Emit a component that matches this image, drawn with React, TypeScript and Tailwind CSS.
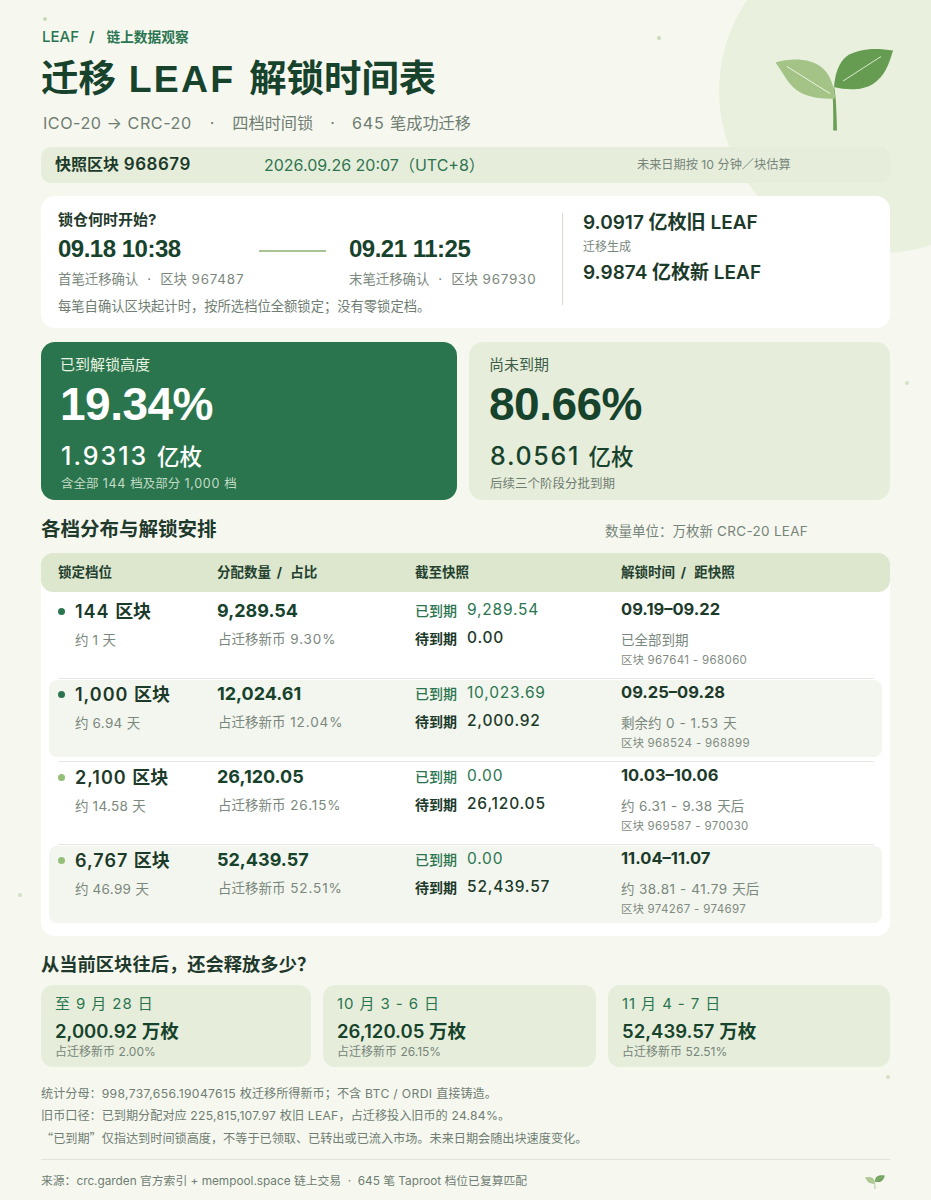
import React from "react";

const LIB = "font-['Liberation_Sans','Noto_Sans_CJK_SC',sans-serif]";

function T({ s, l }: { s: string; l: string }) {
  const parts = s.split(/([\x20-\x7e→·–]+)/);
  return (
    <>
      {parts.map((p, i) =>
        i % 2 === 1 ? (
          <span key={i} className={l}>
            {p}
          </span>
        ) : (
          p
        ),
      )}
    </>
  );
}

function Sprout({ className }: { className: string }) {
  return (
    <svg viewBox="770 44 130 90" className={className}>
      <path d="M834 86 C836 96 836.5 110 837 130.5 L833.2 130.5 C833.5 115 833 100 832.5 92 Z" fill="#6b9f56" />
      <path d="M775.5 62.5 C790 58 808 58 820 66 C830 73 834 86 835.5 98.5 C820 99.5 803 97 793 87 C786 80 782 71 775.5 62.5 Z" fill="#a3c387" />
      <path d="M893 50.5 C876 47.5 858 48.5 847 56 C838 63 835 75 834 87 C846 90 862 91 873 84 C885 76 889 64 893 50.5 Z" fill="#669c52" />
      <path d="M787 66.5 L830 93.5" stroke="#eef4e2" strokeWidth="1" fill="none" />
      <path d="M881 56.5 L843 81" stroke="#dbe9cb" strokeWidth="1" fill="none" />
    </svg>
  );
}

const rows = [
  { dot: "bg-[#2a7550]", name: "144 区块", days: "约 1 天", amt: "9,289.54", pct: "占迁移新币 9.30%", a: "9,289.54", b: "0.00", date: "09.19–09.22", rem: "已全部到期", blk: "区块 967641 - 968060", alt: false, h: "h-[86px]" },
  { dot: "bg-[#2a7550]", name: "1,000 区块", days: "约 6.94 天", amt: "12,024.61", pct: "占迁移新币 12.04%", a: "10,023.69", b: "2,000.92", date: "09.25–09.28", rem: "剩余约 0 - 1.53 天", blk: "区块 968524 - 968899", alt: true, h: "h-[83px]" },
  { dot: "bg-[#94bf78]", name: "2,100 区块", days: "约 14.58 天", amt: "26,120.05", pct: "占迁移新币 26.15%", a: "0.00", b: "26,120.05", date: "10.03–10.06", rem: "约 6.31 - 9.38 天后", blk: "区块 969587 - 970030", alt: false, h: "h-[83px]" },
  { dot: "bg-[#94bf78]", name: "6,767 区块", days: "约 46.99 天", amt: "52,439.57", pct: "占迁移新币 52.51%", a: "0.00", b: "52,439.57", date: "11.04–11.07", rem: "约 38.81 - 41.79 天后", blk: "区块 974267 - 974697", alt: true, h: "h-[78px]" },
];

const releases = [
  { w: "w-[270px]", t: "至 9 月 28 日", v: "2,000.92 万枚", s: "占迁移新币 2.00%" },
  { w: "w-[273px]", t: "10 月 3 - 6 日", v: "26,120.05 万枚", s: "占迁移新币 26.15%" },
  { w: "w-[282px]", t: "11 月 4 - 7 日", v: "52,439.57 万枚", s: "占迁移新币 52.51%" },
];

export default function App() {
  return (
    <div className="relative h-[1200px] w-[931px] overflow-hidden bg-[#f6f8f0] font-['Inter','Noto_Sans_CJK_SC',sans-serif] text-[#1f3a2c]">
      <div className="absolute left-[719px] top-[-71px] h-[324px] w-[324px] rounded-full bg-[#e9f0dd]" />
      <div className="absolute left-[43px] top-[17px] h-[4px] w-[4px] rounded-full bg-[#c9d9b8]" />
      <div className="absolute left-[657px] top-[36px] h-[4px] w-[4px] rounded-full bg-[#c9d9b8]" />
      <div className="absolute left-[905px] top-[381px] h-[4px] w-[4px] rounded-full bg-[#d3e0c4]" />
      <div className="absolute left-[18px] top-[893px] h-[4px] w-[4px] rounded-full bg-[#d3e0c4]" />
      <div className="absolute left-[886px] top-[1075px] h-[4px] w-[4px] rounded-full bg-[#d3e0c4]" />
      <Sprout className="absolute left-[770px] top-[44px] h-[90px] w-[130px]" />

      <div className="relative flex flex-col px-[41px]">
        <div className="mt-[28px] flex h-[18px] items-center font-bold leading-[18px] text-[#2a7550]">
          <span className="ml-[1px] text-[15px] font-medium">LEAF</span>
          <span className="ml-[10px] mr-[12px] text-[14px]">/</span>
          <span className="text-[13.7px]">链上数据观察</span>
        </div>
        <h1 className={`${LIB} mt-[9px] h-[48px] whitespace-pre text-[37.4px] font-bold leading-[48px] text-[#17432d]`}>
          迁移<span className="ml-[13px] mr-[14px] tracking-[2.2px]">LEAF</span>解锁时间表
        </h1>
        <div className="mt-[8px] ml-[2px] flex h-[24px] items-center whitespace-pre text-[16.2px] leading-[24px] text-[#6f7d72]">
          <span className="tracking-[0.5px]">ICO-20 → CRC-20</span>
          <span className="mx-[18px]">·</span>
          <span>四档时间锁</span>
          <span className="mx-[17px]">·</span>
          <span>
            <T s="645 笔成功迁移" l="tracking-[0.8px]" />
          </span>
        </div>

        <div className="mt-[12px] flex h-[36px] items-center rounded-[10px] bg-[#e6eedb] pl-[14px]">
          <span className="w-[209px] text-[16px] font-bold text-[#1c3a2a]">
            <T s="快照区块 968679" l="text-[17px] font-semibold tracking-[0.5px]" />
          </span>
          <span className="w-[373px] text-[16px] text-[#2f7450]">2026.09.26 20:07（UTC+8）</span>
          <span className="text-[12.2px] text-[#76847a]">未来日期按 10 分钟／块估算</span>
        </div>

        <div className="mt-[13px] flex h-[132px] rounded-[14px] bg-white pl-[17px]">
          <div className="w-[504px] pt-[14px]">
            <div className="h-[20px] text-[15px] font-bold leading-[20px] text-[#1f3a2c]">锁仓何时开始?</div>
            <div className="mt-[4px] flex">
              <div className="w-[291px]">
                <div className="flex items-center">
                  <div className={`${LIB} w-[201px] text-[24px] font-bold leading-[30px] tracking-[-0.5px] text-[#17432d]`}>09.18 10:38</div>
                  <div className="mt-[3px] h-[2px] w-[67px] bg-[#a9c395]" />
                </div>
                <div className="mt-[5px] whitespace-pre text-[13.4px] leading-[20px] text-[#7a877d]">
                  首笔迁移确认<span className="mx-[9px]">·</span>
                  <T s="区块 967487" l="tracking-[0.8px]" />
                </div>
              </div>
              <div>
                <div className={`${LIB} text-[24px] font-bold leading-[30px] tracking-[-0.5px] text-[#17432d]`}>09.21 11:25</div>
                <div className="mt-[5px] whitespace-pre text-[13.4px] leading-[20px] text-[#7a877d]">
                  末笔迁移确认<span className="mx-[9px]">·</span>
                  <T s="区块 967930" l="tracking-[0.8px]" />
                </div>
              </div>
            </div>
            <div className="mt-[7px] text-[13.3px] leading-[20px] text-[#6f7d72]">每笔自确认区块起计时，按所选档位全额锁定；没有零锁定档。</div>
          </div>
          <div className="mt-[17px] h-[92px] w-px bg-[#d6dcd2]" />
          <div className="pl-[20px] pt-[14px]">
            <div className="text-[19px] font-semibold leading-[26px] text-[#1c3a2a]">9.0917 亿枚旧 LEAF</div>
            <div className="mt-[2px] text-[12px] leading-[18px] text-[#7a877d]">迁移生成</div>
            <div className="mt-[4px] text-[19px] font-semibold leading-[26px] text-[#1c3a2a]">9.9874 亿枚新 LEAF</div>
          </div>
        </div>

        <div className="mt-[14px] flex h-[158px] gap-[12px]">
          <div className="w-[416px] rounded-[14px] bg-[#2a754d] pl-[19px] pt-[13px] text-white">
            <div className="text-[15px] leading-[20px] text-[#eaf3e2]">已到解锁高度</div>
            <div className={`${LIB} mt-[3px] text-[46px] font-bold leading-[52px] tracking-[-0.5px]`}>19.34%</div>
            <div className="mt-[9px] pl-[1px] text-[22.5px] font-medium leading-[34px]">
              <T s="1.9313 亿枚" l="text-[25px] tracking-[2px]" />
            </div>
            <div className="mt-[1px] pl-[1px] text-[12.5px] leading-[18px] text-[#c4dcc8]">
              <T s="含全部 144 档及部分 1,000 档" l="tracking-[0.7px]" />
            </div>
          </div>
          <div className="w-[421px] rounded-[14px] bg-[#e6eedb] pl-[20px] pt-[13px] text-[#17432d]">
            <div className="text-[15px] leading-[20px] text-[#3b5c47]">尚未到期</div>
            <div className={`${LIB} mt-[3px] text-[46px] font-bold leading-[52px] tracking-[-0.5px]`}>80.66%</div>
            <div className="mt-[9px] pl-[1px] text-[22.5px] font-medium leading-[34px]">
              <T s="8.0561 亿枚" l="text-[25px] tracking-[1.7px]" />
            </div>
            <div className="mt-[1px] pl-[1px] text-[12.5px] leading-[18px] text-[#6f7d72]">后续三个阶段分批到期</div>
          </div>
        </div>

        <div className="mt-[15px] flex h-[28px] items-center">
          <div className="w-[564px] text-[19.5px] font-bold leading-[28px] text-[#1f3a2c]">各档分布与解锁安排</div>
          <div className="mt-[4px] text-[13.5px] text-[#76847a]">
            <T s="数量单位：万枚新 CRC-20 LEAF" l="tracking-[0.3px]" />
          </div>
        </div>

        <div className="mt-[10px] h-[383px] rounded-[14px] bg-white">
          <div className="flex h-[39px] items-center rounded-[12px] bg-[#dce7cd] pl-[17px] text-[13.5px] font-bold text-[#24402f]">
            <div className="w-[159px]">锁定档位</div>
            <div className="w-[198px] whitespace-pre">
              分配数量<span className="tracking-[2.5px]"> / </span>占比
            </div>
            <div className="w-[206px]">截至快照</div>
            <div className="whitespace-pre">
              解锁时间<span className="tracking-[2.5px]"> / </span>距快照
            </div>
          </div>
          <div className="mt-[1px]">
            {rows.map((r, i) => (
              <div key={i} className={`${r.h} relative`}>
                {r.alt && <div className="absolute inset-x-[8px] top-[1px] h-[77px] rounded-[8px] bg-[#f3f6ee]" />}
                {i < 3 && <div className="absolute bottom-0 left-[17px] right-[16px] h-px bg-[#e6e9e2]" />}
                <div className={`relative flex pl-[17px] ${i === 0 ? "pt-[3px]" : "pt-0"}`}>
                  <div className="w-[159px]">
                    <div className="flex h-[30px] items-center">
                      <span className={`h-[7px] w-[7px] rounded-full ${r.dot}`} />
                      <span className="ml-[10px] whitespace-pre text-[18px] font-semibold text-[#1c3a2a]">
                        <T s={r.name} l="tracking-[1px]" />
                      </span>
                    </div>
                    <div className="ml-[17px] mt-[4px] text-[13.5px] leading-[20px] text-[#7a877d]">
                      <T s={r.days} l="tracking-[0.3px]" />
                    </div>
                  </div>
                  <div className="w-[198px]">
                    <div className="flex h-[28px] items-center text-[18px] font-bold text-[#17432d]">{r.amt}</div>
                    <div className="mt-[5px] pl-[1px] text-[13.5px] leading-[20px] text-[#7a877d]">
                      <T s={r.pct} l="tracking-[0.9px]" />
                    </div>
                  </div>
                  <div className="w-[206px]">
                    <div className="flex h-[28px] items-center text-[14px] text-[#2a7550]">
                      <span className="w-[52px] font-medium">已到期</span>
                      <span className="text-[15.5px] tracking-[0.8px]">{r.a}</span>
                    </div>
                    <div className="flex h-[28px] items-center text-[14px] text-[#1c3a2a]">
                      <span className="w-[52px] font-bold">待到期</span>
                      <span className="text-[15.5px] font-medium tracking-[0.8px]">{r.b}</span>
                    </div>
                  </div>
                  <div>
                    <div className="flex h-[26px] items-center text-[16.5px] font-bold text-[#1c3a2a]">{r.date}</div>
                    <div className="mt-[8px] h-[20px] text-[13.5px] leading-[20px] text-[#7a877d]">
                      <T s={r.rem} l="tracking-[0.6px]" />
                    </div>
                    <div className="mt-[1px] text-[11.5px] leading-[18px] text-[#7f8b82]">
                      <T s={r.blk} l="tracking-[0.35px]" />
                    </div>
                  </div>
                </div>
              </div>
            ))}
          </div>
        </div>

        <div className="mt-[14px] h-[28px] text-[18.3px] font-bold leading-[28px] text-[#1f3a2c]">从当前区块往后，还会释放多少？</div>

        <div className="mt-[7px] flex h-[82px] gap-[12px]">
          {releases.map((c) => (
            <div key={c.t} className={`${c.w} rounded-[12px] bg-[#e6eedb] pl-[14px] pt-[9px]`}>
              <div className="text-[15px] leading-[20px] tracking-[0.9px] text-[#2a7550]">{c.t}</div>
              <div className="mt-[4px] text-[18.5px] font-semibold leading-[26px] text-[#17432d]">{c.v}</div>
              <div className="text-[12px] leading-[16px] text-[#76847a]">{c.s}</div>
            </div>
          ))}
        </div>

        <div className="mt-[16px] text-[12.15px] leading-[22px] text-[#6f7d72]">
          <div>
            <T s="统计分母：998,737,656.19047615 枚迁移所得新币；不含 BTC / ORDI 直接铸造。" l="tracking-[0.35px]" />
          </div>
          <div>
            <T s="旧币口径：已到期分配对应 225,815,107.97 枚旧 LEAF，占迁移投入旧币的 24.84%。" l="tracking-[0.25px]" />
          </div>
          <div>
            <span className="font-['Noto_Sans_CJK_SC',sans-serif]">“已到期”</span>仅指达到时间锁高度，不等于已领取、已转出或已流入市场。未来日期会随出块速度变化。
          </div>
        </div>

        <div className="mt-[9px] h-px bg-[#dfe3d8]" />
        <div className="mt-[12px] whitespace-pre text-[11.8px] leading-[18px] text-[#6f7d72]">来源：crc.garden 官方索引 + mempool.space 链上交易  ·  645 笔 Taproot 档位已复算匹配</div>
      </div>
      <Sprout className="absolute left-[864px] top-[1174px] h-[16px] w-[22px] opacity-90" />
    </div>
  );
}
